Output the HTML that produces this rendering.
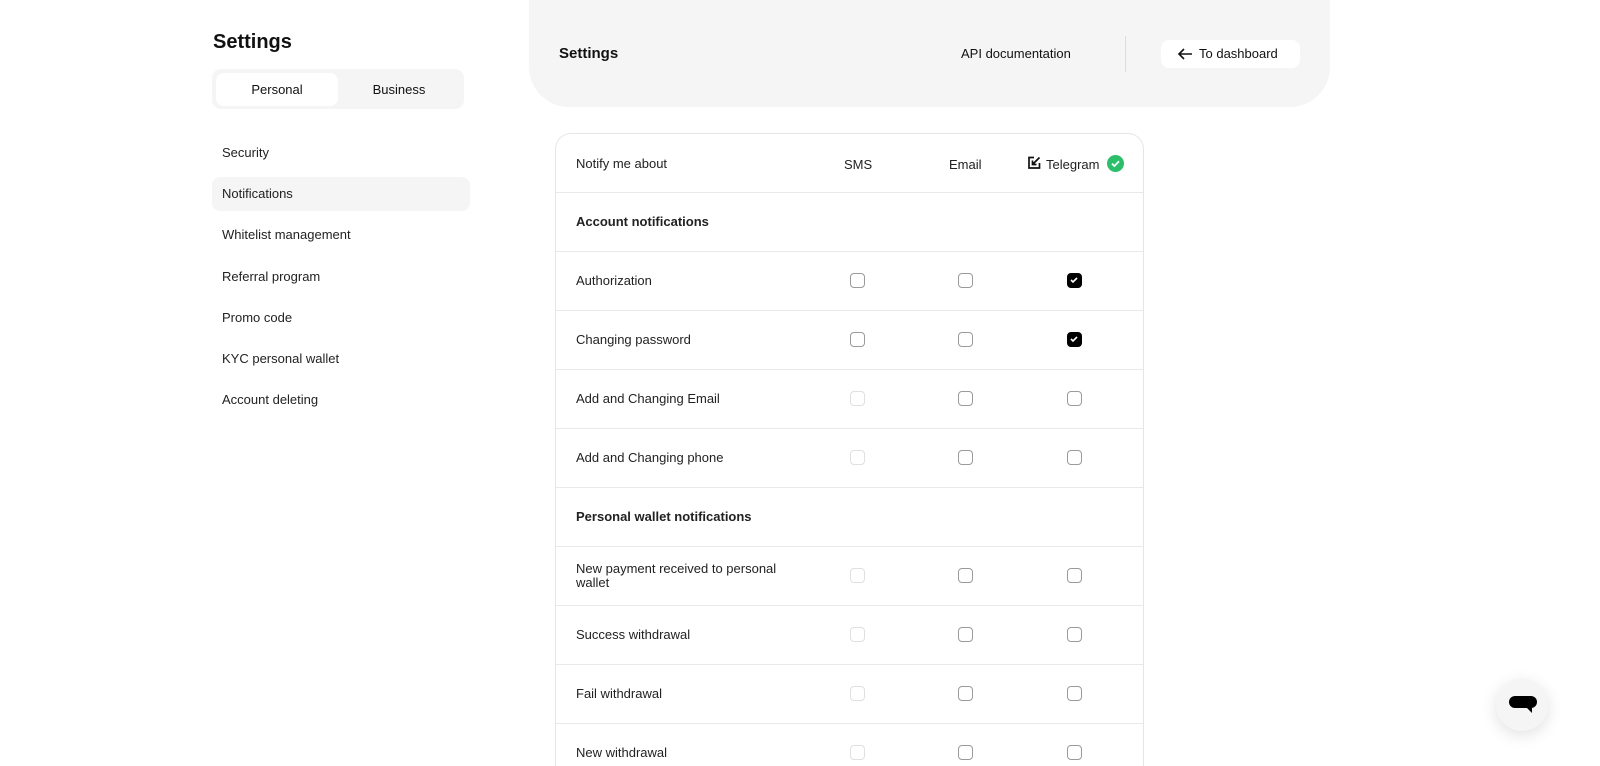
<!DOCTYPE html>
<html style="width:1600px;height:766px;overflow:hidden"><head><meta charset="utf-8"><style>
*{box-sizing:border-box;margin:0;padding:0}
html,body{width:1600px;height:766px;overflow:hidden}
body{background:#fff;font-family:"Liberation Sans",sans-serif;color:#111;position:relative}
.a{position:absolute}
.nav{position:absolute;left:212px;width:258px;height:34px;border-radius:8px;font-size:13px;line-height:34px;padding-left:10px;color:#222}
.tbl{position:absolute;left:555px;top:133px;width:589px;height:633px;border:1px solid #e6e6e6;border-bottom:none;border-radius:16px 16px 0 0;overflow:hidden}
.row{position:absolute;left:0;right:0;height:59px;border-top:1px solid #e9e9e9;font-size:13px;color:#222}
.row .t{position:absolute;left:20px;top:50%;transform:translateY(-50%);line-height:14px}
.cb{position:absolute;top:50%;width:15px;height:15px;margin-top:-8px;border:1.5px solid #9a9a9a;border-radius:4px}
.cb.d{border-color:#e0e0e0}
.cb.on{background:#000;border-color:#000}
.cb.on svg{position:absolute;left:1px;top:1px}
.c1{left:294px}.c2{left:402px}.c3{left:511px}
</style></head><body>
<div class="a" style="left:213px;top:31px;font-size:20px;font-weight:bold">Settings</div>
<div class="a" style="left:212px;top:69px;width:252px;height:40px;background:#f5f5f5;border-radius:9px"></div>
<div class="a" style="left:216px;top:73px;width:122px;height:33px;background:#fff;border-radius:8px;font-size:13px;line-height:33px;text-align:center">Personal</div>
<div class="a" style="left:338px;top:73px;width:122px;height:33px;font-size:13px;line-height:33px;text-align:center">Business</div>
<div class="nav" style="top:136px">Security</div>
<div class="nav" style="top:177px;background:#f5f5f5">Notifications</div>
<div class="nav" style="top:218px">Whitelist management</div>
<div class="nav" style="top:260px">Referral program</div>
<div class="nav" style="top:301px">Promo code</div>
<div class="nav" style="top:342px">KYC personal wallet</div>
<div class="nav" style="top:383px">Account deleting</div>

<div class="a" style="left:529px;top:-40px;width:801px;height:147px;background:#f5f5f5;border-radius:0 0 40px 40px"></div>
<div class="a" style="left:559px;top:45px;font-size:15px;font-weight:bold">Settings</div>
<div class="a" style="left:961px;top:46px;font-size:13px">API documentation</div>
<div class="a" style="left:1125px;top:36px;width:1px;height:36px;background:#ddd"></div>
<div class="a" style="left:1161px;top:40px;width:139px;height:28px;background:#fff;border-radius:8px;font-size:13px;line-height:28px;padding-left:38px">To dashboard</div>
<svg class="a" style="left:1177px;top:47px" width="16" height="14" viewBox="0 0 16 14"><path d="M15 7H2M7 2L2 7l5 5" fill="none" stroke="#111" stroke-width="1.6"/></svg>

<div class="tbl">
 <div class="row" style="top:0;border-top:none">
  <span class="t">Notify me about</span>
  <span class="a" style="left:288px;top:23px">SMS</span>
  <span class="a" style="left:393px;top:23px">Email</span>
  <svg class="a" style="left:471px;top:22px" width="14" height="14" viewBox="0 0 14 14"><path d="M7 1.5H2v10.5h10.5V7" fill="none" stroke="#111" stroke-width="1.7"/><path d="M12.5 1.5L6 8M5.5 4.5V8.5H9.5" fill="none" stroke="#111" stroke-width="1.7"/></svg>
  <span class="a" style="left:490px;top:23px">Telegram</span>
  <svg class="a" style="left:551px;top:21px" width="17" height="17" viewBox="0 0 17 17"><circle cx="8.5" cy="8.5" r="8.5" fill="#2bbf6a"/><path d="M5 8.7l2.4 2.3L12 6.3" fill="none" stroke="#fff" stroke-width="1.8"/></svg>
 </div>
 <div class="row" style="top:58px"><span class="t" style="font-weight:bold">Account notifications</span></div>
 <div class="row" style="top:117px"><span class="t">Authorization</span><i class="cb c1"></i><i class="cb c2"></i><i class="cb c3 on"><svg width="10" height="10" viewBox="0 0 10 10"><path d="M2 5l2 2 4-4" fill="none" stroke="#fff" stroke-width="1.6"/></svg></i></div>
 <div class="row" style="top:176px"><span class="t">Changing password</span><i class="cb c1"></i><i class="cb c2"></i><i class="cb c3 on"><svg width="10" height="10" viewBox="0 0 10 10"><path d="M2 5l2 2 4-4" fill="none" stroke="#fff" stroke-width="1.6"/></svg></i></div>
 <div class="row" style="top:235px"><span class="t">Add and Changing Email</span><i class="cb c1 d"></i><i class="cb c2"></i><i class="cb c3"></i></div>
 <div class="row" style="top:294px"><span class="t">Add and Changing phone</span><i class="cb c1 d"></i><i class="cb c2"></i><i class="cb c3"></i></div>
 <div class="row" style="top:353px"><span class="t" style="font-weight:bold">Personal wallet notifications</span></div>
 <div class="row" style="top:412px"><span class="t">New payment received to personal<br>wallet</span><i class="cb c1 d"></i><i class="cb c2"></i><i class="cb c3"></i></div>
 <div class="row" style="top:471px"><span class="t">Success withdrawal</span><i class="cb c1 d"></i><i class="cb c2"></i><i class="cb c3"></i></div>
 <div class="row" style="top:530px"><span class="t">Fail withdrawal</span><i class="cb c1 d"></i><i class="cb c2"></i><i class="cb c3"></i></div>
 <div class="row" style="top:589px"><span class="t">New withdrawal</span><i class="cb c1 d"></i><i class="cb c2"></i><i class="cb c3"></i></div>
</div>

<div class="a" style="left:1496px;top:679px;width:52px;height:52px;border-radius:50%;background:#f5f5f5;box-shadow:0 4px 16px rgba(0,0,0,.12)"></div>
<svg class="a" style="left:1508px;top:694px" width="30" height="24" viewBox="0 0 30 24"><rect x="1" y="2" width="28" height="12" rx="6" fill="#000"/><path d="M19 14h5v5z" fill="#000"/></svg>
</body></html>
